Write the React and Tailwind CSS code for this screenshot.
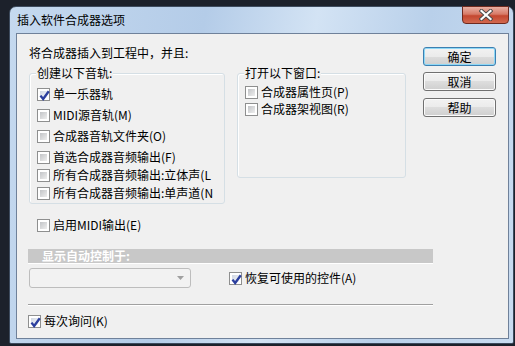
import React from "react";

const font = { fontFamily: '"Noto Sans CJK SC", "Liberation Sans", sans-serif' };

function Box({ checked }) {
  return (
    <div className="w-[13px] h-[13px] shrink-0 border border-[#8e8f8f] bg-white p-[2px]">
      <div
        className={
          checked
            ? "w-full h-full bg-[linear-gradient(135deg,#cfd6e3,#f4f6f9)] relative"
            : "w-full h-full bg-[linear-gradient(135deg,#c2c4c7,#eeeeee)]"
        }
      >
        {checked && (
          <svg viewBox="0 0 9 9" className="absolute -left-[1px] -top-[1px] w-[11px] h-[11px]">
            <path d="M1.2 4.6 L3.4 7.4 L8 1" fill="none" stroke="#2b3f9e" strokeWidth="1.9" />
          </svg>
        )}
      </div>
    </div>
  );
}

function Check({ checked, label, className = "" }) {
  return (
    <div className={"flex items-center h-[16px] gap-[3px] text-[12px] leading-[16px] text-black " + className}>
      <Box checked={checked} />
      <span className="whitespace-nowrap">{label}</span>
    </div>
  );
}

function Btn({ children, def }) {
  return (
    <div
      className={
        "w-[73px] h-[19px] rounded-[3px] border flex items-center justify-center text-[12px] leading-[16px] text-black bg-[linear-gradient(#f2f2f2_0%,#ebebeb_50%,#dddddd_50%,#cfcfcf_100%)] " +
        (def ? "border-[#3c7fb1] shadow-[inset_0_0_0_1px_#8ed8f6]" : "border-[#707070] shadow-[inset_0_0_0_1px_#fbfbfb]")
      }
    >
      {children}
    </div>
  );
}

export default function App() {
  return (
    <div className="w-[515px] h-[346px] bg-[#1c212b] pt-[6px] pl-[9px] overflow-hidden" style={font}>
      <div className="w-[505px] h-[338px] border border-[#3d4b5e] rounded-t-[7px] rounded-b-[2px] bg-[linear-gradient(100deg,#c5d9ef_0%,#b4cce8_35%,#d3e3f4_55%,#b9d0ea_75%,#c9dcf1_100%)] flex flex-col pl-[6px] pr-[4px] pb-[4px]">
        <div className="h-[26px] relative flex items-center pl-[1px]">
          <span className="text-[12px] leading-[16px] text-black">插入软件合成器选项</span>
          <div className="absolute -top-[1px] right-0 w-[47px] h-[18px] rounded-b-[4px] border border-[#6e2a1f] bg-[linear-gradient(#e9b0a3_0%,#d77a66_45%,#c4472f_55%,#d2694f_100%)] flex items-center justify-center">
            <svg viewBox="0 0 14 12" className="w-[14px] h-[12px]">
              <path d="M2.5 2 L11.5 10 M11.5 2 L2.5 10" stroke="#4a4a4a" strokeWidth="4" strokeLinecap="square" />
              <path d="M2.5 2 L11.5 10 M11.5 2 L2.5 10" stroke="#ffffff" strokeWidth="2.2" strokeLinecap="square" />
            </svg>
          </div>
        </div>
        <div className="flex-1 border border-[#6f819a] bg-[#f0f0f0] flex flex-col pl-[11px]">
          <div className="flex">
            <div className="w-[394px] flex flex-col">
              <div className="mt-[11px] pl-[1px] h-[16px] text-[12px] leading-[16px] text-black">将合成器插入到工程中，并且:</div>
              <div className="mt-[12px] pl-[1px] flex">
                <div className="relative w-[196px] h-[131px] border border-[#d5dfe5] rounded-[3px] shadow-[inset_1px_1px_0_#ffffff] flex flex-col pl-[7px]">
                  <span className="absolute -top-[9px] left-[6px] px-[1px] bg-[#f0f0f0] text-[12px] leading-[16px] text-black">创建以下音轨:</span>
                  <Check checked label="单一乐器轨" className="mt-[12px]" />
                  <Check label="MIDI源音轨(M)" className="mt-[5px]" />
                  <Check label="合成器音轨文件夹(O)" className="mt-[5px]" />
                  <Check label="首选合成器音频输出(F)" className="mt-[5px]" />
                  <Check label="所有合成器音频输出:立体声(L" className="mt-[2px]" />
                  <Check label="所有合成器音频输出:单声道(N" className="mt-[2px]" />
                </div>
                <div className="relative ml-[12px] w-[169px] h-[105px] border border-[#d5dfe5] rounded-[3px] shadow-[inset_1px_1px_0_#ffffff] flex flex-col pl-[7px]">
                  <span className="absolute -top-[9px] left-[6px] px-[1px] bg-[#f0f0f0] text-[12px] leading-[16px] text-black">打开以下窗口:</span>
                  <Check label="合成器属性页(P)" className="mt-[10px]" />
                  <Check label="合成器架视图(R)" className="mt-[1px]" />
                </div>
              </div>
              <Check label="启用MIDI输出(E)" className="mt-[13px] ml-[9px]" />
            </div>
            <div className="ml-[1px] pt-[13px] flex flex-col">
              <Btn def>确定</Btn>
              <div className="mt-[6px]"><Btn>取消</Btn></div>
              <div className="mt-[7px]"><Btn>帮助</Btn></div>
            </div>
          </div>
          <div className="mt-[16px] w-[405px] h-[14px] bg-[#c8c8c8] flex items-center pl-[14px] text-[12px] leading-[14px] text-white font-bold">显示自动控制于:</div>
          <div className="w-[405px] h-[1px] bg-white" />
          <div className="mt-[4px] flex items-center">
            <div className="ml-[1px] w-[162px] h-[20px] rounded-[3px] border border-[#bdbdbd] bg-[#f2f2f2] flex items-center justify-end pr-[6px]">
              <svg viewBox="0 0 7 4" className="w-[7px] h-[4px]"><path d="M0 0 H7 L3.5 4 Z" fill="#a0a0a0" /></svg>
            </div>
            <Check checked label="恢复可使用的控件(A)" className="ml-[38px]" />
          </div>
          <div className="mt-[16px] w-[405px] h-[1px] bg-[#a0a0a0]" />
          <div className="w-[405px] h-[1px] bg-white" />
          <Check checked label="每次询问(K)" className="mt-[7px]" />
        </div>
      </div>
    </div>
  );
}
